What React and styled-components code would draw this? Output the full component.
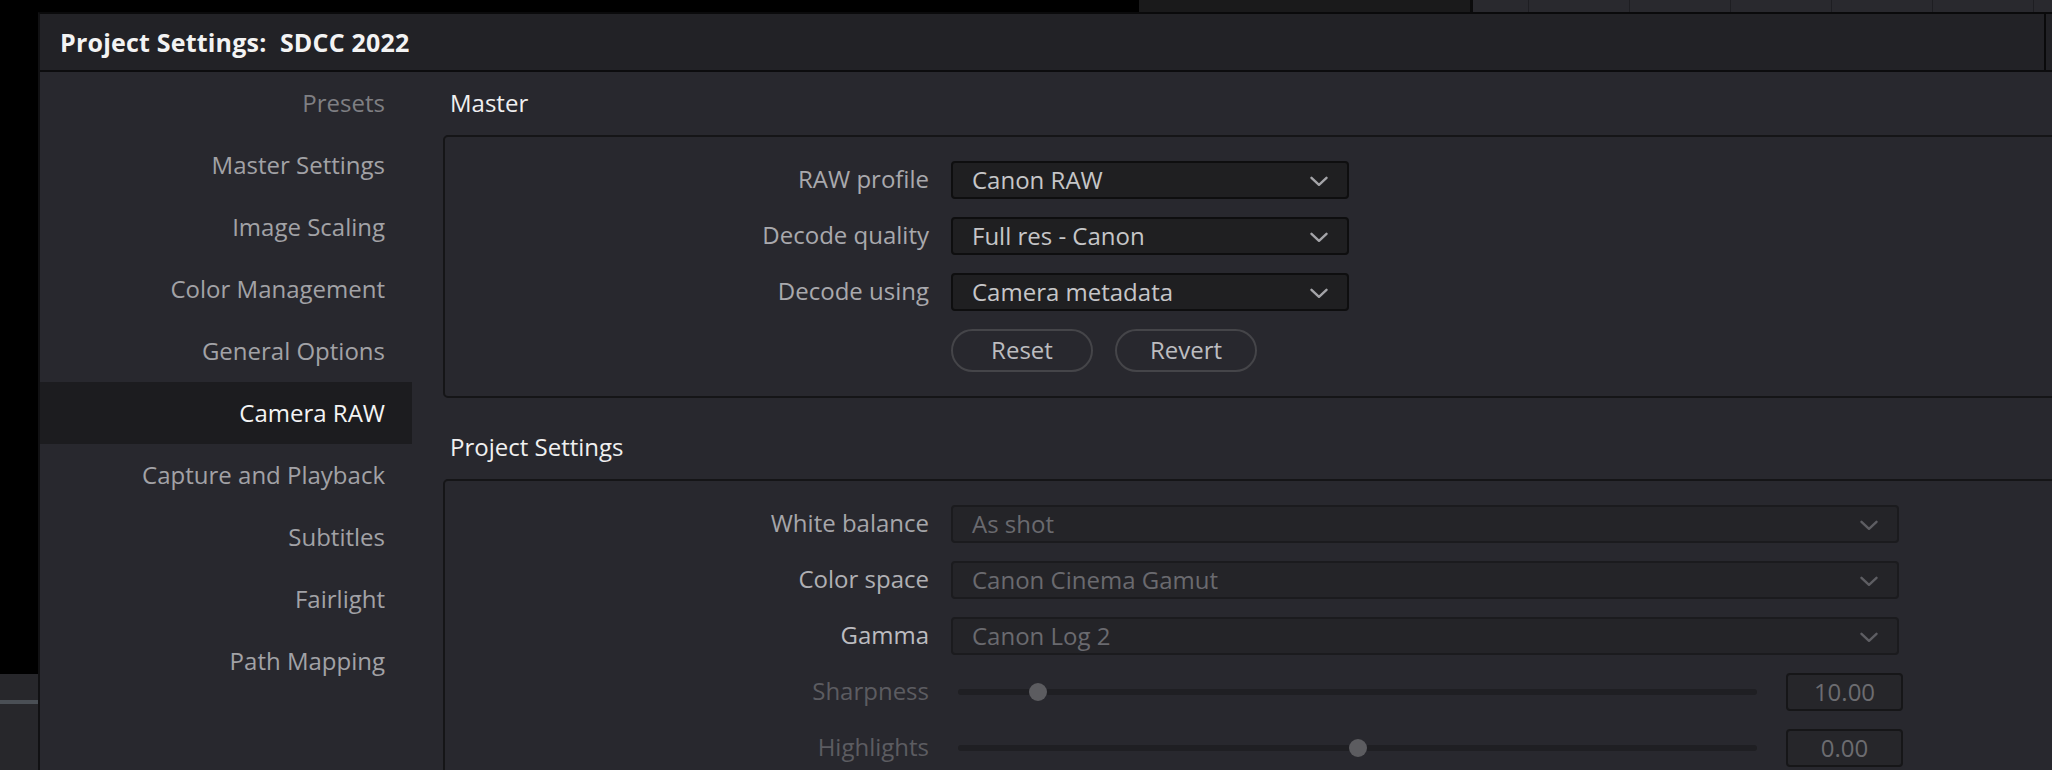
import React from "react";
import styled, { createGlobalStyle } from "styled-components";

const GlobalStyle = createGlobalStyle`
  html, body {
    margin: 0;
    padding: 0;
    background: #000;
  }
  body {
    font-family: "Open Sans", "Liberation Sans", sans-serif;
  }
`;

const navItems = [
  { label: "Presets", tone: "dim" },
  { label: "Master Settings" },
  { label: "Image Scaling" },
  { label: "Color Management" },
  { label: "General Options" },
  { label: "Camera RAW", active: true },
  { label: "Capture and Playback" },
  { label: "Subtitles" },
  { label: "Fairlight" },
  { label: "Path Mapping" },
];

const masterRows = [
  { label: "RAW profile", value: "Canon RAW" },
  { label: "Decode quality", value: "Full res - Canon" },
  { label: "Decode using", value: "Camera metadata" },
];

const projectSelects = [
  { label: "White balance", value: "As shot", color: "#a6a6aa" },
  { label: "Color space", value: "Canon Cinema Gamut", color: "#b0b0b4" },
  { label: "Gamma", value: "Canon Log 2", color: "#bcbcc0" },
];

const projectSliders = [
  { label: "Sharpness", value: 10, min: 0, max: 100 },
  { label: "Highlights", value: 0, min: -100, max: 100 },
];

const stripTabs = [56, 101, 101, 101, 101, 101, 101];

const Chevron = ({ color }) => (
  <svg width="18" height="11" viewBox="0 0 18 11">
    <polyline
      points="1.5,1.8 9,8.8 16.5,1.8"
      fill="none"
      stroke={color}
      strokeWidth="2.4"
      strokeLinecap="round"
      strokeLinejoin="round"
    />
  </svg>
);

const App = () => {
  return (
    <>
      <GlobalStyle />
      <Page>
        <TopStrip>
          <StripBlack />
          <StripDark />
          <StripTabs>
            {stripTabs.map((w, i) => (
              <StripTab key={i} $w={w} />
            ))}
          </StripTabs>
        </TopStrip>

        <Workspace>
          <LeftRail>
            <RailBlack />
            <RailPanel>
              <RailLine />
            </RailPanel>
          </LeftRail>

          <Dialog>
            <TitleRow>
              <TitleMain>Project Settings:&nbsp; SDCC 2022</TitleMain>
            </TitleRow>

            <Body>
              <Sidebar>
                {navItems.map((item) => (
                  <NavItem key={item.label} $active={item.active} $tone={item.tone}>
                    {item.label}
                  </NavItem>
                ))}
              </Sidebar>

              <Main>
                <SectionTitle>Master</SectionTitle>
                <Panel>
                  {masterRows.map((row) => (
                    <React.Fragment key={row.label}>
                      <Label>{row.label}</Label>
                      <Select $width={398}>
                        <span>{row.value}</span>
                        <Chevron color="#a4a4a8" />
                      </Select>
                    </React.Fragment>
                  ))}
                  <span />
                  <ButtonRow>
                    <PillButton>Reset</PillButton>
                    <PillButton>Revert</PillButton>
                  </ButtonRow>
                </Panel>

                <SectionTitle $gap>Project Settings</SectionTitle>
                <Panel $open>
                  {projectSelects.map((row) => (
                    <React.Fragment key={row.label}>
                      <Label $color={row.color}>{row.label}</Label>
                      <Select $width={948} $disabled>
                        <span>{row.value}</span>
                        <Chevron color="#5e5e63" />
                      </Select>
                    </React.Fragment>
                  ))}
                  {projectSliders.map((row) => {
                    const pct = ((row.value - row.min) / (row.max - row.min)) * 100;
                    return (
                      <React.Fragment key={row.label}>
                        <Label $color="#5c5c61">{row.label}</Label>
                        <SliderField>
                          <Track>
                            <Thumb style={{ left: `${pct}%` }} />
                          </Track>
                          <ValueBox>{row.value.toFixed(2)}</ValueBox>
                        </SliderField>
                      </React.Fragment>
                    );
                  })}
                </Panel>
              </Main>
            </Body>
          </Dialog>
        </Workspace>
      </Page>
    </>
  );
};

export default App;

const Page = styled.div`
  width: 2052px;
  height: 770px;
  overflow: hidden;
  display: flex;
  flex-direction: column;
  background: #000;
`;

const TopStrip = styled.div`
  flex: 0 0 12px;
  display: flex;
`;

const StripBlack = styled.div`
  flex: 0 0 1139px;
  background: #000;
`;

const StripDark = styled.div`
  flex: 0 0 331px;
  background: #1a1a1b;
  border-right: 3px solid #0b0b0c;
`;

const StripTabs = styled.div`
  flex: 1;
  display: flex;
  background: #29292e;
`;

const StripTab = styled.div`
  flex: 0 0 ${(p) => p.$w}px;
  box-sizing: border-box;
  border-right: 1px solid #1e1e22;
`;

const Workspace = styled.div`
  flex: 1;
  display: flex;
  min-height: 0;
`;

const LeftRail = styled.div`
  flex: 0 0 38px;
  display: flex;
  flex-direction: column;
`;

const RailBlack = styled.div`
  flex: 1;
  background: #000;
`;

const RailPanel = styled.div`
  flex: 0 0 96px;
  box-sizing: border-box;
  padding-top: 26px;
  background: #27272b;
`;

const RailLine = styled.div`
  height: 4px;
  background: #4a4f55;
`;

const Dialog = styled.div`
  flex: 0 0 2140px;
  display: flex;
  flex-direction: column;
  border-left: 2px solid #111113;
  border-top: 2px solid #0a0a0b;
  background: #28282e;
`;

const TitleRow = styled.div`
  flex: 0 0 56px;
  display: flex;
  background: #222226;
  border-bottom: 2px solid #0c0c0e;
`;

const TitleMain = styled.div`
  flex: 0 0 2006px;
  box-sizing: border-box;
  display: flex;
  align-items: center;
  padding-left: 20px;
  border-right: 2px solid #0a0a0b;
  color: #f3f3f3;
  font-size: 25px;
  font-weight: 700;
  letter-spacing: 0.2px;
  white-space: pre;
`;

const Body = styled.div`
  flex: 1;
  display: flex;
`;

const Sidebar = styled.div`
  flex: 0 0 372px;
  display: flex;
  flex-direction: column;
`;

const NavItem = styled.div`
  height: 62px;
  box-sizing: border-box;
  display: flex;
  align-items: center;
  justify-content: flex-end;
  padding: 0 27px 2px 0;
  font-size: 24px;
  color: ${(p) => (p.$active ? "#f4f4f4" : p.$tone === "dim" ? "#7f7f83" : "#a2a2a6")};
  background: ${(p) => (p.$active ? "#1c1c1f" : "transparent")};
`;

const Main = styled.div`
  flex: 1;
  display: flex;
  flex-direction: column;
  padding-left: 31px;
`;

const SectionTitle = styled.div`
  height: 63px;
  box-sizing: border-box;
  padding: 15px 0 0 7px;
  margin-top: ${(p) => (p.$gap ? "18px" : "0")};
  line-height: 32px;
  font-size: 24px;
  color: #f0f0f0;
`;

const Panel = styled.div`
  display: grid;
  grid-template-columns: 484px auto;
  justify-content: start;
  align-items: center;
  column-gap: 22px;
  row-gap: 18px;
  padding: 24px 0 24px;
  border: 2px solid #151517;
  border-radius: 5px;
  ${(p) => p.$open && "flex: 1; align-content: start;"}
`;

const Label = styled.div`
  text-align: right;
  font-size: 24px;
  line-height: 32px;
  padding-bottom: 2px;
  color: ${(p) => p.$color || "#a9a9ad"};
`;

const Select = styled.div`
  width: ${(p) => p.$width}px;
  height: 38px;
  box-sizing: border-box;
  display: flex;
  align-items: center;
  justify-content: space-between;
  padding: 0 19px 2px 19px;
  border: 2px solid ${(p) => (p.$disabled ? "#1b1b1e" : "#0e0e0f")};
  border-radius: 4px;
  background: ${(p) => (p.$disabled ? "#242428" : "#1f1f21")};
  font-size: 24px;
  color: ${(p) => (p.$disabled ? "#6a6a6f" : "#c6c6c8")};

  svg {
    margin-top: 4px;
  }
`;

const ButtonRow = styled.div`
  display: flex;
  gap: 22px;
`;

const PillButton = styled.button`
  width: 142px;
  height: 43px;
  box-sizing: border-box;
  border: 2px solid #454549;
  border-radius: 22px;
  background: transparent;
  color: #bdbdc0;
  font-family: inherit;
  font-size: 24px;
  padding: 0 0 2px;
`;

const SliderField = styled.div`
  width: 952px;
  box-sizing: border-box;
  display: flex;
  align-items: center;
  padding-left: 7px;
`;

const Track = styled.div`
  position: relative;
  flex: 1;
  height: 6px;
  border-radius: 3px;
  background: #1f1f23;
`;

const Thumb = styled.div`
  position: absolute;
  top: 50%;
  width: 18px;
  height: 18px;
  border-radius: 50%;
  background: #5c5c60;
  transform: translate(-50%, -50%);
`;

const ValueBox = styled.div`
  flex: 0 0 117px;
  height: 38px;
  box-sizing: border-box;
  margin-left: 29px;
  padding-bottom: 2px;
  display: flex;
  align-items: center;
  justify-content: center;
  border: 2px solid #161618;
  border-radius: 4px;
  background: #26262a;
  font-size: 24px;
  color: #6c6c70;
`;
